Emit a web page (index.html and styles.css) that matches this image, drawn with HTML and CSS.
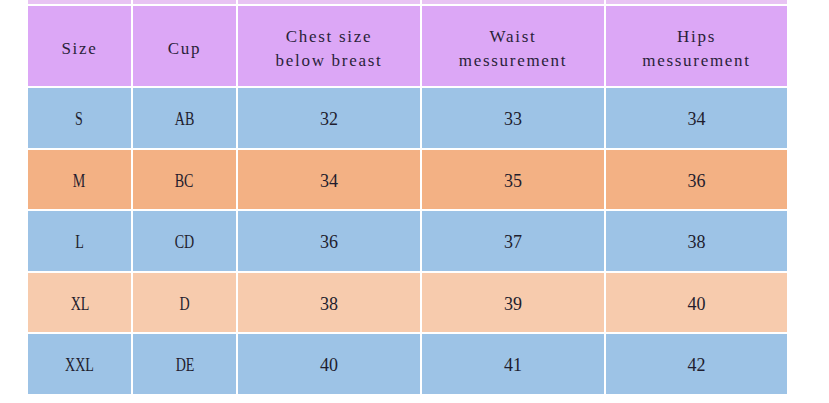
FILE: index.html
```html
<!DOCTYPE html>
<html>
<head>
<meta charset="utf-8">
<link rel="stylesheet" href="styles.css">
</head>
<body>
<div class="table">
  <div class="cell strip"></div><div class="cell strip"></div><div class="cell strip"></div><div class="cell strip"></div><div class="cell strip"></div>
  <div class="cell head">Size</div>
  <div class="cell head">Cup</div>
  <div class="cell head">Chest size<br>below breast</div>
  <div class="cell head">Waist<br>messurement</div>
  <div class="cell head">Hips<br>messurement</div>

  <div class="cell blue"><span class="nar">S</span></div><div class="cell blue"><span class="nar">AB</span></div><div class="cell blue">32</div><div class="cell blue">33</div><div class="cell blue">34</div>
  <div class="cell orange"><span class="nar">M</span></div><div class="cell orange"><span class="nar">BC</span></div><div class="cell orange">34</div><div class="cell orange">35</div><div class="cell orange">36</div>
  <div class="cell blue"><span class="nar">L</span></div><div class="cell blue"><span class="nar">CD</span></div><div class="cell blue">36</div><div class="cell blue">37</div><div class="cell blue">38</div>
  <div class="cell peach"><span class="nar">XL</span></div><div class="cell peach"><span class="nar">D</span></div><div class="cell peach">38</div><div class="cell peach">39</div><div class="cell peach">40</div>
  <div class="cell blue"><span class="nar">XXL</span></div><div class="cell blue"><span class="nar">DE</span></div><div class="cell blue">40</div><div class="cell blue">41</div><div class="cell blue">42</div>
</div>
</body>
</html>
```
FILE: styles.css
```css
html, body {
  margin: 0;
  padding: 0;
  background: #ffffff;
}
.table {
  margin-left: 28px;
  display: grid;
  grid-template-columns: 103px 103px 182px 182px 181px;
  grid-template-rows: 4px 80px 60px 59px 60px 59px 60px;
  column-gap: 2px;
  row-gap: 2px;
  font-family: "Liberation Serif", "DejaVu Serif", serif;
  font-size: 18px;
  color: #1f1d2e;
}
.cell {
  display: flex;
  align-items: center;
  justify-content: center;
  text-align: center;
  line-height: 24px;
  padding-top: 2px;
}
.nar {
  display: inline-block;
  transform: scaleX(0.78);
}
.strip { background: #e8c3f3; padding-top: 0; }
.head {
  background: #dca7f6;
  padding-top: 6px;
  font-size: 17px;
  letter-spacing: 1.7px;
  color: #2a1f3a;
}
.blue { background: #9dc3e6; }
.orange { background: #f3b184; }
.peach { background: #f7cbad; }
```
